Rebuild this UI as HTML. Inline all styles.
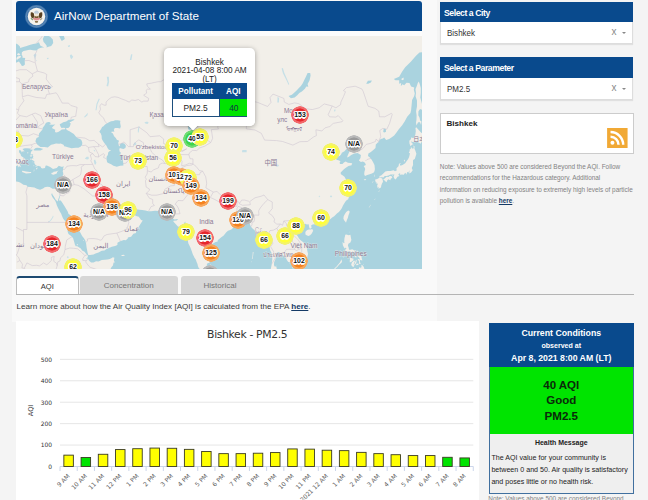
<!DOCTYPE html>
<html lang="en"><head><meta charset="utf-8"><title>AirNow Department of State</title>
<style>
*{box-sizing:border-box;margin:0;padding:0}
html,body{width:648px;height:500px;overflow:hidden}
body{background:#f4f4f4;font-family:"Liberation Sans",sans-serif;color:#222;position:relative}
.abs{position:absolute;white-space:nowrap}
.hdr{left:16.2px;top:1.2px;width:405.8px;height:29.4px;background:#094a8d;border-radius:3px 3px 0 0}
.ttl{left:54px;top:7.8px;font-size:11.65px;color:#fff;line-height:15px}
.ph{background:#094a8d;color:#fff;line-height:20px;padding-left:4px}
.ph span{display:block;line-height:21.6px;font-weight:bold;font-size:9.8px;letter-spacing:-0.5px;transform:scaleX(.885);transform-origin:0 50%}
.sel{background:#fff;border:1px solid #ddd;border-top:none;box-shadow:0 1px 1px rgba(0,0,0,.08);color:#333;line-height:22px;padding-left:6px}
.sel span{display:block;line-height:23.6px;font-size:9px;transform:scaleX(.89);transform-origin:0 50%}
.note{font-size:6.4px;color:#828282;line-height:11.55px}
a{color:#143a66;font-weight:bold;text-decoration:underline}
.tab{top:276px;height:18px;background:#d6d6d6;border-radius:3px 3px 0 0;color:#777;font-size:8.05px;text-align:center;line-height:20.6px}
.mk{position:absolute;width:18px;height:18px;margin:-9px 0 0 -9px;border-radius:50%}
.ml{position:absolute;width:30px;height:10px;margin:-5px 0 0 -15px;font-weight:bold;font-size:8px;line-height:10px;text-align:center;color:#111;transform:scaleX(.86);
 text-shadow:1px 0 0 #fff,-1px 0 0 #fff,0 1px 0 #fff,0 -1px 0 #fff,1px 1px 0 #fff,-1px -1px 0 #fff,1px -1px 0 #fff,-1px 1px 0 #fff,1.5px 0 .5px #fff,-1.5px 0 .5px #fff,0 1.5px .5px #fff,0 -1.5px .5px #fff,0 0 1.5px #fff,0 0 1.5px #fff}
.r{background:radial-gradient(circle,#e6262b 0,#e6262b 6.3px,#f2686a 6.8px,#f2686a 8.6px,rgba(242,104,106,0) 9px)}
.o{background:radial-gradient(circle,#f5821f 0,#f5821f 6.3px,#f7a75c 6.8px,#f7a75c 8.6px,rgba(247,167,92,0) 9px)}
.y{background:radial-gradient(circle,#ffff38 0,#ffff38 6.3px,#f3f36a 6.8px,#f3f36a 8.6px,rgba(243,243,106,0) 9px)}
.g{background:radial-gradient(circle,#9a9a9a 0,#9a9a9a 6.3px,#b9b9b9 6.8px,#b9b9b9 8.6px,rgba(185,185,185,0) 9px)}
.n{background:radial-gradient(circle,#3fd34a 0,#3fd34a 6.3px,#6fdc74 6.8px,#6fdc74 8.6px,rgba(111,220,116,0) 9px)}
</style></head>
<body>
<div class="abs" style="left:12px;top:0;width:425px;height:322px;background:#f9f9f9"></div>
<div class="abs" style="left:16.2px;top:30px;width:405.8px;height:6px;background:#fcfcfc"></div>
<div class="abs hdr"></div>
<svg class="abs" style="left:25px;top:5px" width="23" height="23" viewBox="0 0 23 23">
<circle cx="11.5" cy="11.5" r="11.4" fill="#4677aa"/><circle cx="11.5" cy="11.5" r="10.3" fill="none" stroke="#5f8dbb" stroke-width="1" opacity=".8"/>
<circle cx="11.5" cy="11.5" r="8.7" fill="#f6f3ec"/>
<ellipse cx="11.5" cy="7.3" rx="2.2" ry="1.9" fill="#bccad8"/>
<path d="M5.8 7.4 Q7.4 7 8.9 8.4 L9.2 12.6 Q7.6 13.4 6.4 12.4 Q5.2 10 5.8 7.4Z" fill="#5b4222"/>
<path d="M17.2 7.4 Q15.6 7 14.1 8.4 L13.8 12.6 Q15.4 13.4 16.6 12.4 Q17.8 10 17.2 7.4Z" fill="#5b4222"/>
<path d="M9.4 9.2 Q11.5 7.6 13.6 9.2 L13.4 12.8 L9.6 12.8Z" fill="#efe6d6"/>
<path d="M9.3 10.4 Q11.5 12.4 13.7 10.4 L13.5 12.9 L9.5 12.9Z" fill="#7a5a30"/>
<path d="M8 12.9 H15 V14.3 Q11.5 16.6 8 14.3Z" fill="#dc8e90"/>
<path d="M5.4 13 Q6.6 15.2 8 15.6 L7.6 13.4Z" fill="#6b8f5a"/>
<path d="M17.6 13 Q16.4 15.2 15 15.6 L15.4 13.4Z" fill="#a09070"/>
<path d="M9.6 15.6 Q11.5 16.6 13.4 15.6 L12.6 17.8 H10.4Z" fill="#8a744e"/>
</svg>
<div class="abs ttl">AirNow Department of State</div>
<div class="abs" id="map" style="left:16.2px;top:35.6px;width:405.8px;height:233.7px;background:#f2efe9;overflow:hidden">
<svg class="abs" style="left:0;top:0" width="405.8" height="233.7" viewBox="16.2 35.6 405.8 233.7"><path d="M3.8 33.6 15.7 36.4 15.1 39.9 15.4 42.6 18.1 44.0 20.1 46.0 20.4 47.6 23.4 46.6 26.9 45.5 29.7 44.6 33.4 43.6 36.4 43.0 39.1 41.9 40.7 45.3 43.4 46.6 44.4 47.0 42.4 47.0 40.4 47.6 38.1 48.6 37.1 50.2 33.4 49.9 30.4 49.3 28.4 49.6 26.2 50.2 23.7 50.7 22.1 51.9 21.9 54.4 22.7 55.7 22.7 57.3 25.4 57.6 24.9 60.4 25.1 64.2 23.7 65.4 22.1 65.7 20.9 63.5 19.1 61.1 16.7 62.0 15.4 63.2 13.7 66.9 3.8 66.9Z" fill="#aad3df" /><path d="M46.7 47.0 48.7 46.3 51.4 45.6 53.4 42.6 53.0 39.2 50.4 36.4 47.0 34.7 44.4 35.4 43.0 38.5 43.7 41.3 45.4 43.3 47.0 45.6Z" fill="#aad3df" /><path d="M62.0 40.6 65.0 38.5 63.7 34.4 61.0 30.8 58.7 30.1 58.0 33.6 59.7 36.4 61.0 39.2Z" fill="#aad3df" /><path d="M33.7 54.8 35.4 53.2 36.7 54.4 35.6 57.3 35.7 59.5 37.4 60.4 36.7 60.8 35.1 58.3 34.4 56.4Z" fill="#c6e0e7" /><path d="M47.0 57.6 48.7 57.3 48.7 58.6 47.4 58.9Z" fill="#c6e0e7" /><path d="M68.0 45.3 70.2 44.6 70.0 46.3 68.4 46.6Z" fill="#c6e0e7" /><path d="M70.0 55.1 71.4 53.8 73.4 56.4 71.7 58.9 70.7 57.6Z" fill="#c6e0e7" /><path d="M40.6 146.7 37.4 144.2 36.9 143.1 35.6 140.9 36.7 137.7 38.9 136.6 39.2 133.1 42.5 129.4 42.9 127.3 44.5 125.4 46.2 122.3 48.4 121.5 50.2 121.8 51.0 123.2 49.4 124.2 52.4 124.4 55.5 124.2 53.4 125.8 52.0 127.7 55.4 129.4 55.2 131.5 56.4 132.2 58.4 131.5 60.7 130.1 61.9 129.2 65.2 128.9 65.5 127.5 63.7 127.3 61.7 127.7 60.7 126.1 59.9 123.9 61.4 123.0 63.4 121.8 66.4 121.1 68.9 119.4 71.0 119.4 73.4 118.9 74.9 119.4 72.4 120.6 71.2 121.3 69.7 121.8 70.9 123.0 70.5 124.7 70.0 126.1 68.5 127.5 66.4 127.5 66.4 128.9 68.0 130.1 69.7 130.8 72.0 132.4 74.0 133.6 76.0 136.1 78.0 137.9 80.3 138.6 81.8 140.0 82.5 142.4 82.3 144.7 81.0 146.0 78.7 147.3 76.0 147.4 71.7 147.8 70.0 147.3 68.0 146.9 65.7 146.0 64.7 146.2 63.7 144.4 60.9 143.0 59.4 143.3 56.2 143.2 53.7 143.8 51.4 144.4 49.7 145.7 48.0 147.0 44.7 146.7 42.1 146.7Z" fill="#aad3df" /><path d="M33.6 149.5 35.4 147.8 37.1 147.4 40.1 147.5 43.4 148.5 40.7 150.2 37.1 150.2 34.7 150.2Z" fill="#aad3df" /><path d="M3.8 165.4 16.1 165.4 16.7 165.8 17.4 164.6 18.4 166.3 18.7 167.1 19.1 165.6 20.2 166.3 21.1 166.9 20.6 165.4 19.6 163.4 19.9 162.3 21.1 163.2 22.1 162.7 21.6 161.1 22.4 160.6 23.7 161.9 24.1 160.0 25.7 160.4 25.6 159.6 24.2 157.7 22.1 156.2 20.1 154.9 21.4 155.6 20.7 153.6 19.4 152.1 19.1 150.2 20.2 149.5 21.6 150.8 21.7 152.1 22.9 150.8 23.7 152.1 23.4 150.4 25.1 151.2 23.6 149.7 22.7 148.6 25.1 147.9 27.4 147.8 30.1 148.2 30.6 149.1 33.1 149.3 31.1 151.7 31.1 152.3 30.7 154.1 33.4 153.8 32.7 154.9 33.6 156.4 32.9 157.5 34.1 158.5 32.1 157.9 31.4 159.2 32.9 159.8 34.6 160.9 34.4 162.9 35.7 163.8 34.9 164.6 37.4 164.6 35.1 165.9 37.1 166.1 38.1 165.4 40.7 166.1 41.4 167.7 42.7 168.1 45.2 167.7 45.7 165.4 47.0 165.2 50.4 166.6 53.2 168.6 56.9 167.7 59.0 165.4 61.4 166.3 62.5 166.3 64.4 166.1 63.2 167.5 63.5 168.7 62.9 170.8 63.5 172.8 63.0 175.0 62.0 177.2 60.7 180.4 60.4 181.5 59.7 184.4 58.5 186.7 57.7 187.5 56.4 188.1 54.4 188.3 52.7 188.4 51.4 187.6 49.9 186.6 47.4 186.3 44.9 186.8 43.2 188.1 40.2 189.3 37.1 188.4 34.6 187.2 30.4 186.5 27.6 186.4 26.7 184.9 23.6 184.4 20.7 182.4 19.1 181.6 16.7 181.1 14.7 181.6 3.8 181.6Z" fill="#aad3df" /><path d="M16.1 159.2 18.1 158.8 20.1 159.6 20.9 160.4 19.9 160.6 18.1 159.7 16.4 159.4Z" fill="#aad3df" /><path d="M101.3 128.5 99.5 131.3 101.0 133.1 101.8 135.4 102.0 138.6 103.3 140.9 104.7 142.9 106.7 145.3 107.7 147.5 109.0 149.3 111.5 150.2 110.0 150.6 108.5 151.9 108.0 154.5 106.8 156.4 106.7 158.7 107.3 161.9 108.5 162.7 111.3 163.8 113.6 165.4 117.0 166.3 120.3 165.4 123.6 165.2 123.5 163.2 123.1 159.6 123.1 156.2 122.0 154.9 120.3 154.1 121.3 152.1 120.1 151.9 119.5 149.3 120.0 147.5 121.6 148.2 123.6 148.6 125.6 147.5 126.1 145.3 124.6 143.1 122.0 142.7 120.3 143.8 120.0 146.2 118.8 144.9 118.5 142.2 119.3 140.4 117.0 139.3 116.0 137.7 114.3 135.9 113.1 133.1 111.1 131.5 113.3 131.0 114.6 131.5 114.0 129.4 115.0 127.5 118.0 127.5 120.3 128.0 121.0 126.1 120.3 122.3 120.6 120.3 118.0 119.8 115.3 119.8 113.6 120.6 111.3 120.8 108.7 122.0 107.0 123.0 105.3 124.2 103.7 125.8 102.3 126.6Z" fill="#aad3df" /><path d="M145.6 123.2 144.6 122.0 146.3 121.3 147.9 121.3 148.9 122.3 147.6 123.5Z" fill="#c6e0e7" /><path d="M138.1 132.2 138.0 129.9 138.5 127.0 139.3 125.6 139.8 126.1 139.3 128.5 139.1 130.8 138.8 132.2Z" fill="#c6e0e7" /><path d="M133.6 144.4 134.6 142.2 136.3 142.4 136.5 144.0 135.0 145.1Z" fill="#c6e0e7" /><path d="M189.2 129.9 191.2 128.9 193.2 124.9 195.6 122.7 199.6 122.3 203.6 123.0 207.2 122.5 207.6 121.1 204.2 121.1 200.2 121.1 195.6 121.1 192.6 121.1 190.6 123.2 188.6 125.6 188.2 128.0Z" fill="#aad3df" /><path d="M197.6 141.1 200.2 140.0 204.2 139.7 204.6 141.1 201.9 142.2 198.9 142.0Z" fill="#aad3df" /><path d="M214.2 124.7 215.9 123.0 217.2 123.9 215.9 125.4Z" fill="#c6e0e7" /><path d="M221.2 115.4 223.5 114.2 226.5 114.9 223.5 115.7Z" fill="#c6e0e7" /><path d="M288.8 95.6 291.1 97.8 294.8 97.2 297.5 94.8 299.5 92.7 302.1 91.0 305.1 88.3 306.5 86.1 308.5 86.3 307.8 83.5 309.8 79.8 310.8 75.2 310.4 72.6 307.8 72.6 306.1 76.4 304.5 79.6 302.8 83.0 301.1 85.5 299.1 87.7 296.8 90.2 294.1 92.7 292.1 94.4 290.1 95.1Z" fill="#aad3df" /><path d="M281.8 68.1 283.1 72.9 285.5 77.5 287.5 81.6 288.5 84.4 289.5 83.8 286.8 77.5 284.5 72.3 283.1 67.5Z" fill="#c6e0e7" /><path d="M277.5 102.2 279.1 102.0 279.3 97.5 277.8 96.4Z" fill="#c6e0e7" /><path d="M251.2 103.8 252.8 102.2 254.8 103.0 253.5 104.3Z" fill="#c6e0e7" /><path d="M383.4 131.5 384.0 128.0 386.0 128.5 386.2 131.3 384.7 132.0Z" fill="#aad3df" /><path d="M275.6 165.6 276.8 164.0 278.6 164.4 279.1 165.6 277.5 166.3Z" fill="#c6e0e7" /><path d="M85.0 158.3 86.7 156.4 88.7 156.4 89.0 158.7 87.3 159.0Z" fill="#c6e0e7" /><path d="M94.0 159.8 95.3 159.2 96.5 162.1 96.0 164.0 94.7 163.8 94.2 161.7Z" fill="#c6e0e7" /><path d="M54.4 158.3 55.5 156.2 56.0 157.9Z" fill="#c6e0e7" /><path d="M93.7 149.3 94.8 149.7 95.7 151.0 94.3 150.8Z" fill="#c6e0e7" /><path d="M288.8 252.7 290.1 252.9 292.0 254.9 291.1 255.2 289.8 253.9Z" fill="#c6e0e7" /><path d="M67.0 256.8 68.0 255.7 69.0 256.8 68.0 257.9Z" fill="#c6e0e7" /><path d="M53.2 215.0 53.7 216.3 52.0 219.2 50.0 221.3 48.4 222.0 48.4 221.5 50.4 219.9 52.4 217.0Z" fill="#c6e0e7" /><path d="M343.2 188.2 344.1 186.7 345.2 187.7 344.4 188.8Z" fill="#c6e0e7" /><path d="M330.1 196.3 331.1 194.8 332.4 195.9 331.4 197.1Z" fill="#c6e0e7" /><path d="M318.8 196.3 320.1 195.0 320.4 195.9 319.4 196.9Z" fill="#c6e0e7" /><path d="M334.1 110.9 334.8 108.9 335.9 109.4 335.3 111.2Z" fill="#c6e0e7" /><path d="M366.4 83.3 368.1 80.4 372.1 80.1 371.1 82.1 368.4 83.3Z" fill="#aad3df" /><path d="M242.2 151.9 242.5 149.7 246.8 149.7 246.8 151.9Z" fill="#c6e0e7" /><path d="M106.7 85.5 107.7 81.0 107.0 76.4 109.0 76.4 109.3 81.6 108.3 86.1Z" fill="#c6e0e7" /><path d="M95.7 109.9 96.7 103.3 99.0 98.0 100.0 98.6 97.7 103.8 96.7 109.9Z" fill="#c6e0e7" /><path d="M130.0 59.5 131.3 53.8 132.6 53.8 131.6 59.5Z" fill="#c6e0e7" /><path d="M84.0 116.9 86.7 113.9 88.0 112.4 87.7 114.9 85.3 116.9Z" fill="#c6e0e7" /><path d="M61.7 188.2 61.9 185.7 62.4 185.7 62.2 188.2Z" fill="#c6e0e7" /><path d="M110.3 283.6 110.0 269.9 111.6 266.9 113.1 265.2 113.8 262.2 115.0 262.0 114.1 260.1 114.6 257.3 113.0 256.9 112.0 257.6 110.0 258.6 107.7 259.1 105.0 259.3 102.0 259.6 98.7 261.0 96.3 260.8 93.7 262.0 91.3 262.0 89.3 260.3 88.7 259.0 87.5 258.1 86.0 258.3 87.3 257.4 88.0 256.9 88.0 255.1 86.2 253.4 84.7 251.3 82.3 250.0 81.0 248.1 79.0 246.9 77.0 245.5 76.2 246.0 75.2 244.5 74.4 241.7 73.4 238.2 72.0 236.2 68.7 233.7 68.2 232.3 67.7 230.5 67.9 227.0 67.4 224.9 66.5 222.0 63.4 218.4 62.0 215.0 61.4 213.4 60.0 211.0 58.0 207.1 56.9 204.7 56.4 202.9 55.4 200.4 54.0 198.7 52.5 196.5 51.5 194.0 52.2 192.7 52.7 194.0 54.4 196.7 55.7 199.1 57.9 201.1 58.5 198.9 59.4 196.3 60.2 194.2 60.4 195.2 59.5 198.6 59.0 200.1 61.0 200.1 62.7 202.5 65.2 206.6 67.9 211.0 68.7 213.7 70.5 214.5 72.0 216.3 73.7 219.2 74.2 223.8 76.0 227.0 77.8 228.6 80.5 232.2 82.3 235.5 84.0 237.5 85.5 240.0 86.3 243.1 86.8 247.2 87.8 252.3 88.5 254.6 90.3 254.7 93.7 254.0 95.7 253.0 98.7 252.0 102.0 250.3 104.7 250.0 107.3 248.2 110.3 247.0 112.0 246.4 115.3 245.5 117.6 244.5 117.6 242.4 120.3 240.8 124.0 239.6 126.0 239.8 128.0 238.2 128.0 237.2 131.3 236.3 133.6 233.4 136.3 232.7 136.0 230.4 136.5 228.1 138.3 227.7 140.0 224.5 141.6 222.0 142.9 220.2 141.3 219.5 139.0 216.3 136.3 215.6 132.8 213.6 131.5 210.8 131.6 206.2 130.6 207.1 130.1 208.2 128.0 210.3 125.0 213.2 122.3 214.5 119.0 214.1 116.3 214.8 115.0 213.4 115.6 211.6 115.5 210.1 115.6 207.9 114.3 207.0 113.1 209.0 113.0 211.9 112.1 210.5 111.0 209.0 110.6 206.0 109.1 203.8 107.3 201.9 106.5 201.0 105.3 198.6 104.0 196.3 103.0 195.0 104.2 194.0 105.5 192.7 107.0 190.9 109.0 192.3 110.6 191.7 112.3 194.4 113.1 196.5 114.6 200.4 117.3 201.6 119.0 202.7 121.6 204.7 124.6 205.1 126.6 205.5 129.0 204.7 131.3 203.2 133.6 203.6 134.0 206.8 134.6 208.4 136.1 208.8 139.6 209.4 142.3 209.7 145.6 210.1 148.6 210.8 151.3 210.8 155.3 210.3 158.9 210.5 161.9 209.9 164.6 209.4 165.9 210.5 166.9 211.9 168.3 214.8 169.9 215.7 170.9 216.3 172.6 217.7 174.8 219.1 177.6 218.6 178.2 218.8 176.9 220.2 173.8 220.4 173.5 221.1 175.6 223.3 178.1 226.0 180.2 226.7 182.2 226.0 183.9 224.9 184.2 222.9 185.4 221.1 185.9 223.3 186.1 225.1 186.4 227.7 186.1 230.5 186.3 232.8 186.9 236.2 187.9 239.6 188.6 243.1 189.6 245.0 190.6 247.2 191.9 250.6 192.9 253.7 194.7 257.3 196.1 259.3 196.9 261.8 197.7 263.7 198.1 265.5 198.7 267.2 199.9 268.6 201.2 269.7 202.1 270.0 202.1 283.6Z" fill="#aad3df" /><path d="M202.1 283.6 202.1 270.0 204.1 268.2 204.2 267.1 206.6 266.0 207.9 265.9 206.7 264.9 207.9 262.5 209.7 262.5 209.7 260.1 209.5 257.0 211.2 253.0 210.5 250.6 210.7 247.9 210.5 245.5 212.5 243.6 214.2 242.6 215.2 241.9 217.9 241.0 217.9 239.8 221.2 237.2 223.9 235.1 226.5 231.8 228.2 230.4 229.7 229.8 231.5 229.1 232.9 227.9 233.5 226.3 233.2 224.5 235.2 223.5 236.9 223.1 237.2 222.2 238.5 223.5 241.9 223.1 244.5 222.6 245.5 221.0 247.5 219.9 249.5 221.0 250.2 224.2 251.2 226.3 253.2 228.6 254.8 229.5 255.3 231.3 256.8 233.0 258.0 234.8 258.7 237.5 257.8 240.0 257.5 243.1 259.2 243.6 261.2 244.0 262.5 243.1 264.2 241.4 266.5 238.6 267.5 240.0 268.8 241.5 269.3 243.8 269.5 245.7 270.5 250.0 271.8 252.7 272.2 255.2 272.5 258.5 272.0 263.5 271.5 266.2 271.0 268.6 271.2 269.9 271.2 283.6Z" fill="#aad3df" /><path d="M277.8 283.6 277.8 269.2 276.8 268.2 276.6 266.2 274.8 266.2 274.2 264.5 274.3 261.8 275.3 259.5 276.1 257.4 276.7 254.8 276.8 252.7 278.5 251.7 280.0 252.0 279.8 254.6 281.1 254.6 282.8 254.4 284.5 256.1 285.8 257.1 287.1 259.5 288.5 261.5 290.8 261.7 291.8 262.3 293.8 263.5 293.0 265.2 292.6 268.2 294.5 267.6 296.0 266.0 298.5 264.9 299.5 262.5 300.5 262.3 302.1 261.7 303.8 260.5 306.5 259.1 307.5 257.1 307.8 255.4 308.3 253.7 307.6 250.8 307.1 247.9 306.5 246.2 304.3 242.7 302.5 241.2 300.5 239.6 299.0 237.9 298.1 236.2 296.0 233.7 296.5 230.0 298.8 228.3 299.5 226.3 301.5 225.6 303.5 223.8 305.5 223.3 307.1 224.0 308.9 223.8 309.3 226.3 309.8 228.1 311.1 228.1 311.8 227.0 311.3 225.2 312.8 224.2 314.8 223.8 316.6 222.9 319.4 222.6 321.1 221.7 321.9 221.5 322.1 219.3 323.1 220.4 324.4 221.0 326.1 219.9 327.9 219.3 330.4 218.8 332.4 217.2 334.4 215.9 337.1 213.2 339.1 211.6 340.8 209.7 342.1 207.5 343.1 205.3 344.4 203.1 346.2 200.4 348.4 198.9 349.1 196.7 349.7 192.9 348.1 191.7 346.4 191.1 347.7 190.2 349.9 189.0 349.2 187.3 349.7 185.9 348.1 183.6 346.4 181.6 346.2 179.2 344.7 176.4 342.7 174.8 341.1 173.8 340.8 172.4 342.1 170.8 344.1 168.9 345.7 167.5 348.7 165.6 351.7 164.8 352.4 162.9 350.4 162.5 348.1 162.3 345.9 161.2 344.1 162.1 342.7 163.6 340.1 163.6 339.9 161.7 340.9 161.3 339.4 160.0 336.8 159.4 335.4 157.9 335.9 156.4 337.8 156.2 339.8 155.6 341.1 154.3 342.1 152.3 344.7 150.8 346.4 148.9 347.7 148.0 349.7 148.2 350.7 149.7 349.1 152.3 348.1 154.5 347.2 157.0 349.1 156.4 351.4 154.5 354.4 153.0 357.9 152.5 359.4 153.6 361.1 154.7 360.7 157.5 359.1 160.0 361.1 161.5 363.1 161.1 365.2 162.3 366.1 164.6 363.9 165.6 365.1 167.5 365.4 168.9 364.7 171.2 364.4 173.8 365.2 175.6 367.4 174.6 369.2 174.0 371.4 173.4 373.7 172.4 374.7 170.8 375.1 168.5 374.7 164.6 373.2 161.5 371.7 159.2 370.1 157.0 368.2 155.6 368.6 153.2 371.1 151.7 374.1 149.1 375.7 147.5 376.0 144.2 378.0 142.0 379.2 141.5 379.4 140.2 381.0 138.6 383.0 138.2 384.4 137.2 386.4 139.5 389.4 138.6 392.0 136.8 394.4 135.2 396.7 132.2 399.0 128.9 402.4 124.9 405.0 120.8 407.4 116.4 410.7 112.7 411.3 109.9 411.8 104.8 412.3 99.6 414.3 95.9 415.0 93.2 414.0 89.4 414.5 87.2 411.3 86.1 409.7 82.7 406.7 82.4 404.4 84.9 402.7 83.8 401.0 85.8 401.4 82.7 399.4 83.3 399.4 79.8 395.7 79.8 394.0 78.7 399.4 76.4 402.4 71.1 405.4 66.9 411.0 61.4 416.0 55.7 419.7 52.2 424.3 51.5 443.3 51.2 443.3 283.6Z" fill="#aad3df" /><path d="M16.6 57.6 17.7 56.0 20.4 55.4 21.4 56.4 20.1 57.6 18.1 58.6 17.1 59.8 16.7 58.9Z" fill="#f2efe9" /><path d="M17.2 53.5 19.1 52.5 20.6 54.1 19.1 55.1 17.4 54.4Z" fill="#f2efe9" /><path d="M22.2 171.7 22.4 170.3 24.1 170.6 26.2 171.1 28.1 171.4 29.6 171.5 31.4 171.5 31.2 172.6 29.1 172.9 26.2 173.1 23.7 172.1Z" fill="#f2efe9" /><path d="M51.4 172.6 53.4 172.1 53.7 171.3 56.0 171.2 58.9 170.0 57.2 171.6 57.2 172.9 55.7 173.5 53.7 174.4 51.9 173.9Z" fill="#f2efe9" /><path d="M36.2 168.1 37.7 166.9 37.4 168.5 36.6 169.1Z" fill="#f2efe9" /><path d="M29.9 155.3 31.7 154.5 32.4 156.0 30.4 156.2Z" fill="#f2efe9" /><path d="M30.1 158.1 30.9 158.1 30.7 159.6 30.1 159.4Z" fill="#f2efe9" /><path d="M27.2 152.1 28.6 152.1 28.4 152.8 27.4 152.8Z" fill="#f2efe9" /><path d="M28.2 163.8 29.1 164.0 28.9 164.8 28.3 164.7Z" fill="#f2efe9" /><path d="M32.4 161.3 33.9 161.5 33.4 161.9 32.4 161.7Z" fill="#f2efe9" /><path d="M33.6 165.0 34.9 165.2 33.7 165.9Z" fill="#f2efe9" /><path d="M34.1 169.1 34.6 169.4 34.2 171.2 33.9 171.0Z" fill="#f2efe9" /><path d="M139.0 228.4 140.0 226.8 140.1 227.4 139.3 228.6Z" fill="#f2efe9" /><path d="M121.3 254.9 123.6 254.4 125.3 254.9 123.6 255.7 122.0 255.7Z" fill="#f2efe9" /><path d="M128.0 205.3 130.3 204.0 131.1 204.2 130.0 205.1Z" fill="#f2efe9" /><path d="M111.8 208.1 112.0 206.6 112.5 206.8 112.3 208.1Z" fill="#f2efe9" /><path d="M76.7 244.5 77.7 243.6 78.3 244.5 77.3 244.8Z" fill="#f2efe9" /><path d="M83.0 240.7 83.7 239.8 84.3 240.7Z" fill="#f2efe9" /><path d="M209.5 283.6 209.2 269.9 209.9 267.1 209.9 264.5 210.9 264.1 212.9 266.0 214.4 268.4 214.9 269.9 216.5 272.6 216.2 283.6Z" fill="#f2efe9" /><path d="M252.0 258.3 252.7 256.1 253.0 251.5 253.7 251.7 253.3 255.7 252.7 258.5Z" fill="#f2efe9" /><path d="M251.5 261.7 252.2 260.5 252.0 261.8Z" fill="#f2efe9" /><path d="M270.5 257.4 271.0 256.4 271.2 257.8Z" fill="#f2efe9" /><path d="M419.0 81.0 420.0 83.8 421.0 87.7 421.0 92.7 420.5 97.0 421.7 101.7 423.0 106.4 424.3 108.9 425.7 111.7 423.3 109.9 420.3 108.7 418.7 110.9 418.5 114.9 419.8 117.4 420.3 120.1 421.7 121.1 421.3 124.7 420.3 122.0 419.2 121.5 418.0 122.3 416.8 125.1 416.2 122.3 416.7 119.4 416.8 114.9 416.3 110.9 417.2 105.9 417.2 100.1 415.8 95.9 416.2 92.7 415.7 88.8 417.0 85.5 418.0 82.7Z" fill="#f2efe9" /><path d="M416.5 126.9 418.7 129.4 421.2 132.2 424.3 134.0 427.7 132.7 427.3 135.4 429.3 137.0 426.7 138.6 424.7 138.8 422.3 140.4 420.8 143.4 418.7 141.8 415.3 140.4 413.3 141.8 411.3 140.9 412.0 142.7 413.8 143.8 412.5 144.2 410.7 145.8 409.7 143.1 409.5 140.4 411.3 138.6 411.2 137.0 413.3 137.7 414.5 137.2 415.5 134.3 416.0 130.8 415.7 127.5Z" fill="#f2efe9" /><path d="M413.0 145.2 414.8 145.8 414.7 148.0 415.5 150.2 416.6 153.4 415.8 156.2 415.0 158.7 413.3 159.6 413.2 162.1 413.3 164.6 412.0 167.5 412.9 169.9 411.3 172.0 409.5 173.2 409.5 171.2 410.0 170.2 409.2 170.6 408.8 172.2 407.4 171.6 407.0 173.2 406.2 174.4 405.9 172.4 405.0 172.8 404.0 174.4 402.0 174.2 400.0 174.5 400.7 173.6 399.5 172.8 398.5 174.4 399.7 175.6 397.7 176.4 395.9 179.0 394.5 178.0 393.7 176.0 394.7 174.2 393.0 174.2 390.7 174.0 388.7 175.0 386.7 175.6 384.9 175.6 383.7 177.2 382.0 176.8 379.7 177.0 379.7 175.6 381.4 175.0 383.5 173.2 385.5 171.0 387.9 170.6 390.9 170.6 393.7 169.8 395.2 170.8 396.9 170.0 396.7 167.9 398.7 165.9 399.2 163.4 401.2 162.5 400.0 164.2 400.7 165.4 402.7 164.6 405.4 162.9 406.9 160.6 408.4 158.7 409.3 156.6 410.2 153.2 409.0 152.1 410.0 150.6 409.7 149.3 411.0 148.4 411.2 146.4 412.3 148.0 413.7 148.0 414.0 146.4Z" fill="#f2efe9" /><path d="M383.4 179.4 385.7 177.4 386.7 176.4 388.7 176.6 390.2 175.4 392.2 176.0 392.5 177.4 391.0 178.4 390.6 179.8 388.5 178.8 387.4 180.0 386.7 181.9 385.7 181.2 384.9 180.0Z" fill="#f2efe9" /><path d="M379.9 177.0 382.4 178.2 383.0 179.8 383.2 181.6 382.4 182.6 381.5 185.1 381.2 187.2 380.0 187.5 378.9 188.6 378.7 186.3 377.7 187.7 377.4 185.1 378.2 183.2 376.7 183.6 377.0 182.0 376.0 182.2 375.5 180.2 375.1 179.4 376.5 178.8 378.0 178.4Z" fill="#f2efe9" /><path d="M374.1 176.2 374.9 174.0 375.1 174.4 374.6 176.4Z" fill="#f2efe9" /><path d="M404.0 160.4 405.0 159.2 405.2 160.4 404.4 161.3Z" fill="#f2efe9" /><path d="M392.4 175.6 393.4 174.4 393.2 175.6Z" fill="#f2efe9" /><path d="M363.9 179.6 365.1 178.6 366.6 179.0 365.4 179.9Z" fill="#f2efe9" /><path d="M368.9 207.1 370.9 204.4 371.1 204.7 369.4 207.1Z" fill="#f2efe9" /><path d="M374.1 199.3 375.7 198.2 375.2 199.1Z" fill="#f2efe9" /><path d="M379.5 190.9 380.2 189.4 380.0 191.1Z" fill="#f2efe9" /><path d="M378.0 191.3 378.9 190.9 378.7 191.7Z" fill="#f2efe9" /><path d="M372.2 182.2 373.7 180.4 373.1 182.2Z" fill="#f2efe9" /><path d="M348.6 210.1 349.9 211.2 349.6 212.6 348.7 214.8 348.1 217.4 347.2 219.3 346.2 222.4 345.6 221.3 344.3 219.9 343.6 218.1 343.9 215.9 345.1 213.7 346.4 211.7 347.4 210.8Z" fill="#f2efe9" /><path d="M311.1 229.0 312.4 228.6 313.4 230.4 311.8 233.4 310.3 234.8 308.5 235.5 305.8 234.4 305.5 232.3 306.0 230.9 307.5 229.5 309.1 229.1Z" fill="#f2efe9" /><path d="M347.4 185.5 349.7 186.7 348.1 186.3Z" fill="#f2efe9" /><path d="M349.9 191.9 351.1 192.1 350.4 192.7Z" fill="#f2efe9" /><path d="M289.6 262.2 290.3 262.2 290.1 263.5Z" fill="#f2efe9" /><path d="M284.3 256.4 284.8 256.8 284.5 256.9Z" fill="#f2efe9" /><path d="M276.6 265.0 277.1 265.2 276.8 265.5Z" fill="#f2efe9" /><path d="M345.4 234.4 346.7 234.1 348.9 234.9 350.6 234.4 351.2 237.5 351.6 239.5 350.6 242.1 348.6 243.4 348.1 245.2 348.9 247.4 349.2 249.3 350.7 249.3 352.4 248.9 353.4 249.4 354.4 250.1 356.6 250.3 355.2 251.5 355.9 252.9 357.2 253.2 357.1 254.9 356.2 254.6 355.2 253.5 354.1 252.0 352.6 250.5 352.1 252.7 351.1 251.5 349.4 250.3 347.7 251.3 346.9 250.8 345.6 250.6 345.4 249.3 346.4 248.4 346.6 247.7 345.4 247.4 345.2 248.4 344.2 247.2 343.1 244.8 342.7 241.7 344.1 242.9 344.7 242.6 344.4 241.0 344.7 237.7 345.2 235.8Z" fill="#f2efe9" /><path d="M344.4 251.8 346.6 251.7 347.4 252.0 348.6 254.4 347.9 255.7 346.9 255.7 346.1 254.4 345.2 252.7Z" fill="#f2efe9" /><path d="M334.1 268.9 335.4 267.4 336.8 266.0 338.4 264.0 340.1 262.0 341.1 260.1 341.8 258.8 342.2 261.5 341.3 262.5 339.3 264.4 337.9 266.2 336.3 267.6 334.8 269.1Z" fill="#f2efe9" /><path d="M342.9 256.8 344.6 256.1 344.1 256.9Z" fill="#f2efe9" /><path d="M349.7 257.1 351.4 257.6 352.6 258.1 353.9 258.3 353.2 260.1 352.1 261.2 350.1 262.0 349.9 260.5 350.2 258.8Z" fill="#f2efe9" /><path d="M354.1 260.1 355.2 260.7 354.6 262.2 353.9 263.9 354.4 265.9 353.4 266.7 352.1 265.5 351.4 264.4 352.1 262.2 353.2 261.2Z" fill="#f2efe9" /><path d="M354.4 265.4 355.6 263.7 356.4 262.5 356.9 260.1 356.9 259.1 356.2 259.8 355.4 261.8 354.6 263.9Z" fill="#f2efe9" /><path d="M356.1 264.5 357.1 263.0 358.6 263.4 358.7 264.4 357.1 264.9Z" fill="#f2efe9" /><path d="M357.7 258.6 358.7 258.5 360.1 259.1 360.2 261.5 360.9 263.5 359.9 263.5 359.2 263.0 359.4 261.2 358.7 260.1 358.1 259.0Z" fill="#f2efe9" /><path d="M357.7 254.9 361.1 254.9 361.7 256.4 362.1 258.5 362.6 260.1 360.4 259.5 359.7 257.5 358.7 256.5Z" fill="#f2efe9" /><path d="M354.1 255.4 355.7 254.7 356.9 257.1 355.4 256.9 355.1 256.1Z" fill="#f2efe9" /><path d="M352.1 283.6 352.2 269.9 353.4 268.6 354.6 267.9 356.2 268.2 356.1 269.7 357.4 269.4 358.9 268.6 359.4 266.9 360.6 267.4 361.7 266.9 361.6 264.4 363.2 265.4 364.1 266.9 364.6 268.6 364.6 283.6Z" fill="#f2efe9" /><path d="M363.4 264.5 363.9 263.4 364.1 264.2Z" fill="#f2efe9" /><path d="M356.9 251.3 357.7 249.8 358.1 251.0 357.4 251.7Z" fill="#f2efe9" /><path d="M349.6 252.0 350.4 251.7 350.2 252.5Z" fill="#f2efe9" /><path d="M349.4 231.6 350.1 231.4 349.7 232.0Z" fill="#f2efe9" /><path d="M401.4 78.7 403.7 77.0 404.0 79.0 402.4 79.8Z" fill="#f2efe9" /><path d="M107.3 123.2 105.3 121.3 103.7 117.4 100.7 114.9 99.0 112.4 100.7 108.9 100.0 105.6 101.7 103.3 104.3 104.8 106.3 104.8 106.3 101.7 108.7 99.1 111.6 97.0 115.0 96.4 118.3 97.0 122.0 98.6 125.6 99.9 129.3 101.7 132.0 99.6 135.3 100.1 138.6 99.1 142.0 101.7 143.9 100.7 148.3 100.7 148.9 98.0 145.3 95.9 143.9 94.8 146.9 92.7 146.3 89.9 147.6 88.8 150.6 88.8 147.6 85.8 146.9 83.5 151.9 82.7 154.3 82.1 158.6 81.3 160.9 81.3 163.6 79.6 170.9 77.5 173.6 75.2 179.6 75.8 180.9 82.1 184.2 81.6 188.6 83.3 189.2 85.5 191.9 84.9 198.6 82.1 199.9 81.0 203.2 87.2 210.2 100.7 214.9 100.7 221.5 99.6 227.5 106.9 232.9 105.9 234.5 109.2 236.2 109.1M118.6 144.2 122.3 142.7 124.3 141.5 128.6 146.2 130.3 146.2 130.3 129.4 139.0 126.6 146.9 132.2 150.3 136.3 159.9 135.4 163.9 138.6 163.6 143.1 165.3 143.6 165.9 146.7 169.9 146.7 170.6 148.4 173.6 145.8 177.6 143.1 180.1 142.0M130.3 146.2 133.6 146.2 134.0 143.6 137.0 140.9 139.0 139.5 143.6 142.2 143.9 145.8 149.9 147.1 151.9 151.9 156.9 156.4 162.6 159.6 165.4 163.2M123.3 163.2 126.3 162.7 128.3 160.0 134.3 159.4 138.3 161.9 141.3 162.5 144.9 166.1 147.4 166.1 147.6 170.4M147.6 170.4 151.3 171.6 153.9 169.4 158.6 167.5 159.6 164.2 162.3 162.7 165.4 163.2 169.6 163.8 170.3 164.8 174.6 164.2 177.6 162.1 177.9 159.2 181.2 159.2 182.2 160.9 181.9 165.4 185.6 164.6 189.6 162.9 193.2 163.6M193.2 163.6 192.2 164.6 186.9 165.2 182.2 167.1 180.9 168.7 182.2 172.0 180.6 175.2 180.6 176.6 176.9 176.8 176.6 180.4 174.6 182.8 174.6 185.1 170.9 185.5 164.9 189.0 164.6 192.9 156.9 194.8 151.9 194.8 146.5 193.0M147.6 170.4 147.3 173.6 145.3 176.8 146.6 178.8 145.6 180.4 146.4 186.7 149.6 188.6 149.3 190.2 146.5 193.0 149.6 197.8 152.9 199.1 152.9 203.1 154.6 205.1 151.3 206.2 148.9 210.5M105.5 192.7 103.7 190.6 102.7 188.6 103.2 185.5 97.3 180.8 95.0 176.8 96.3 173.2 97.7 172.0 96.3 169.6 95.0 168.7 93.0 164.0 91.0 160.4 91.7 158.7 90.5 154.5 93.0 153.2 95.3 156.2 98.7 156.6 100.3 155.3 103.7 153.2 104.8 154.5 103.7 157.0 106.7 158.5M93.0 164.0 84.8 164.2 80.3 164.2 77.0 165.4 72.0 165.2 67.0 165.9 65.9 167.7 64.4 169.1 63.5 169.0M84.8 164.2 81.3 166.7 81.7 168.7 81.0 173.6 80.0 175.2 73.0 179.2 74.4 184.2 67.0 186.7 70.4 190.6 68.7 192.5 66.2 193.1 63.9 195.5 60.2 195.0M73.0 179.2 66.4 183.6 62.9 181.8 62.4 179.8 65.7 176.0 63.7 174.2M60.7 180.4 62.4 179.8M62.9 181.8 62.2 183.2 61.9 186.7 60.4 194.2M57.9 187.7 60.0 194.4M74.4 184.2 78.3 184.9 84.0 188.2 92.7 195.5 98.3 195.9 98.8 195.9 101.8 196.3 102.7 198.0 105.0 198.0M98.8 195.9 100.7 192.7 103.5 192.5M86.3 241.7 87.7 240.7 87.5 238.6 90.3 238.2 94.3 238.2 98.3 238.8 100.3 239.8 102.0 239.3 104.3 235.5 107.3 234.1 117.0 232.7 120.6 240.8M117.0 232.7 127.0 229.1 129.1 222.0 127.6 219.5 119.0 218.6 115.6 214.1M127.6 219.5 129.6 214.1 130.6 212.1 131.5 211.4M113.0 212.1 114.3 212.6 115.5 212.6M27.6 186.4 26.1 191.7 27.1 195.5 27.1 222.0 27.1 229.1 23.7 229.1 23.7 230.9 23.7 244.1 20.1 245.2 18.7 249.6 17.4 253.4 16.4 254.7 18.7 256.8 20.1 260.1 17.1 261.8M27.1 222.0 48.0 222.0 48.7 221.3 48.4 222.0 66.7 222.0M23.7 230.9 13.7 225.6M20.1 260.1 22.7 263.9 22.1 267.6 24.4 267.9 27.1 262.5 32.4 265.2 36.7 264.9 39.7 265.5 42.4 263.5 43.7 262.5 47.0 264.4 50.0 261.8 51.7 259.8 51.5 257.8 51.7 256.8 54.4 256.1 54.0 258.1 54.0 261.0 56.7 262.8 57.4 265.2 58.0 261.5 60.2 260.5 60.7 257.4 64.0 254.4 65.2 249.1 65.5 245.8 67.0 239.5 72.4 236.2M24.4 267.9 27.7 270.6M57.4 265.2 56.2 269.1 53.7 270.9M65.2 249.1 70.0 247.6 73.7 247.9 77.7 248.4 82.7 252.7 85.0 255.2 83.0 258.1 83.0 260.1 86.7 260.2 87.8 258.6M85.0 255.2 87.3 254.4M86.7 260.2 85.8 261.5 89.0 265.7 90.3 266.9 100.2 270.2 103.6 270.2 97.0 276.9M170.9 216.3 172.8 213.7 180.2 213.4 178.9 208.6 177.2 205.3 175.3 203.8 178.2 200.1 183.2 200.3 186.9 195.5 189.9 192.5 192.2 188.6 191.9 185.5 194.6 183.6 192.6 181.6 190.2 180.0 190.1 174.4 195.2 174.4 199.9 174.2 200.2 172.4 202.9 170.8M193.2 163.6 196.2 165.9 199.6 170.2 202.9 170.8 205.9 176.4 206.9 182.8 206.1 187.5 213.5 191.7 217.2 191.1 221.9 195.5 227.2 197.8 230.2 200.1 233.2 200.1 237.2 200.4M213.5 191.7 210.5 197.1 214.2 198.7 221.2 202.5 225.5 202.7 229.5 205.3 237.2 206.0 237.2 200.4 239.9 202.7M239.5 203.4 242.8 204.9 250.5 204.4 250.2 201.9 248.8 200.8 244.8 199.7 241.9 199.7 239.9 202.7 239.5 203.4M250.2 201.0 255.2 197.4 261.2 195.9 264.2 194.6 268.0 199.3 264.2 202.9 260.5 207.5 258.8 210.5 259.2 214.8 254.5 214.6 254.8 218.4 254.2 221.3 252.2 222.0 252.2 224.5 251.0 226.5M240.4 222.4 239.9 218.8 239.4 214.1 237.2 212.8 237.2 208.2 238.4 206.0 242.8 207.5 243.0 210.1 251.5 211.2 250.8 214.1 247.5 214.8 247.5 216.6 248.5 218.4 249.5 217.4 251.2 216.3 252.2 222.0M268.0 199.3 272.5 201.6 272.5 208.2 268.8 212.6 272.5 215.2 274.8 218.8 274.2 221.5 277.1 223.8 280.6 223.6 277.1 227.9 273.5 229.8 270.2 230.2 268.2 234.4 269.3 237.2 271.8 240.3 273.2 242.7 270.8 246.2 273.8 251.3 274.2 254.7 275.6 257.4 272.8 262.3 272.0 263.5M277.1 227.9 278.5 230.9 281.1 230.7 280.0 237.5 283.8 235.5 286.8 234.8 290.1 235.1 292.6 238.2 292.6 241.4 295.5 244.1 295.3 247.7 294.1 248.8 286.8 248.9 285.1 251.3 284.6 252.3 286.5 257.9M294.1 248.8 296.8 250.1 302.0 247.6 301.8 255.4 298.1 256.9 296.3 258.3 297.5 260.1 293.5 260.5 291.6 262.2M284.0 220.6 286.5 223.1 287.1 226.0 292.1 227.0 290.1 230.2 293.5 233.5 294.1 235.1 298.5 239.6 301.8 244.5 302.0 247.6M303.5 223.6 300.1 222.6 298.8 218.8 294.5 217.4 292.8 219.2 290.0 220.2 284.0 220.6 282.8 224.9 280.6 223.6M236.2 109.1 238.9 113.4 243.5 115.7 246.8 121.3 246.5 128.5 255.2 129.6 261.5 132.9 264.8 139.7 276.8 140.2 282.8 141.1 293.1 144.7 300.1 141.3 307.8 141.1 313.4 136.8 316.6 135.2 316.1 129.4 322.1 130.6 325.1 127.5 330.1 126.1 333.4 123.0 342.4 121.3 343.1 120.3 338.4 115.2 336.1 116.7 329.8 116.4 328.4 114.2 332.4 105.6M236.2 109.1 242.2 105.3 246.8 102.7 251.2 100.4 257.8 102.0 267.8 106.1 271.2 102.0 270.2 97.2 273.2 93.7 284.1 98.0 284.5 101.7 289.1 104.0 294.8 102.5 299.1 103.3 305.5 108.2 312.4 109.2 319.4 107.4 324.4 103.5 332.4 105.6 336.1 107.4 340.8 104.3 341.1 101.7 343.7 96.2 345.7 91.3 343.6 90.2 346.7 87.2 355.4 85.8 362.1 88.6 363.4 91.0 368.4 105.9 375.1 107.9 379.0 110.7 379.7 116.4 385.0 116.4 391.7 112.9 392.5 113.7 389.7 123.2 387.0 128.9 383.0 128.0 380.0 130.1 381.0 136.3 378.7 141.1 379.0 141.8M378.9 141.3 376.4 138.6 375.7 141.1 370.4 143.1 366.4 144.0 363.4 147.8 358.1 151.9M365.7 160.6 367.1 159.2 371.2 157.9M234.5 109.4 229.5 112.9 228.5 119.6 220.2 118.9 217.9 126.8 218.7 128.7 211.5 129.2 212.9 137.9 210.9 142.2 204.9 145.8 199.9 147.5 196.9 150.2 192.9 149.9 189.6 152.5 189.1 154.3 190.2 158.3 193.2 158.5 193.1 163.6M210.9 142.2 207.6 139.7 196.9 139.1 192.6 137.7 188.6 141.3 182.7 139.5 180.1 142.0 180.9 146.7 178.6 145.8 177.6 148.0 182.6 151.0 186.9 148.4 183.6 149.9 178.6 151.5 174.6 151.0 178.2 154.1 189.1 154.3M174.6 151.0 172.3 151.0 170.3 154.1 168.3 155.3 171.6 159.6 169.6 163.8M22.1 83.5 22.4 91.0 22.6 96.4 28.1 94.8 36.1 97.0 41.4 97.5 45.5 98.0 46.9 94.0 49.7 93.7 48.0 88.3 52.7 86.3 49.7 83.0 46.4 78.7 47.0 74.1 44.4 72.6 37.7 70.8 32.4 73.5 33.1 75.8 29.4 78.7 28.7 81.6 22.1 83.5M49.7 93.7 56.4 92.4 58.4 95.4 62.4 102.7 68.7 102.7 71.0 105.1 77.3 106.9 76.0 114.9 76.3 115.7 71.4 116.9 71.0 119.4M22.6 97.0 24.1 100.4 19.2 107.1 18.9 109.4 17.6 112.9 20.1 115.2 26.7 116.4 32.4 113.7 35.4 112.7 40.9 115.2 44.0 122.7 40.2 124.7 37.7 127.3 42.5 128.5M32.4 113.7 37.7 121.8 37.7 127.3M18.9 109.4 13.7 107.9M13.7 122.3 20.1 115.2M13.7 130.8 18.6 130.8 19.4 133.1 20.4 135.0 28.4 135.6 33.7 133.3 39.1 135.2M19.4 133.1 18.4 138.6 18.2 141.8 20.2 146.0 25.4 145.1 31.6 144.4 35.4 142.9 37.1 143.1M31.6 144.4 32.4 146.2 30.6 148.6M13.7 148.0 20.2 146.0M18.2 141.8 13.7 142.2M37.2 50.2 35.1 54.4 35.4 62.3 37.7 70.8M24.9 60.3 29.1 60.1 34.9 62.3M13.7 71.2 20.1 69.3 26.7 69.3 32.4 73.5M13.7 76.4 19.7 78.4 19.7 81.3 22.1 83.5M13.7 81.4 19.7 81.3M36.4 43.0 41.1 37.8 43.7 33.6M77.0 136.8 85.3 137.7 90.0 140.4 94.3 140.0 98.5 143.6 103.0 146.7 105.7 143.8M82.2 145.2 85.7 144.9 88.7 147.1 89.3 151.5 93.0 153.2M88.7 147.1 93.7 146.2 99.3 146.2 98.5 143.6M93.7 146.2 95.7 148.4 97.0 151.0 98.7 154.1 98.7 156.6" fill="none" stroke="#ccc2d0" stroke-width="0.65" stroke-linejoin="round" opacity="0.85"/><g text-anchor="middle" fill="#8a7a96" font-family="'Liberation Sans','DejaVu Sans','Noto Sans CJK SC',sans-serif" stroke="#f2efe9" stroke-width="0.8" paint-order="stroke" stroke-opacity="0.7"><text x="36.5" y="88.2" font-size="6.6">Беларусь</text><text x="56.5" y="116.2" font-size="6.6">Україна</text><text x="24.0" y="127.2" font-size="6.6">România</text><text x="63.0" y="158.6" font-size="6.6">Türkiye</text><text x="20.0" y="163.2" font-size="6.6">Ελλάς</text><text x="165.0" y="116.4" font-size="6.6">Қазақстан</text><text x="152.0" y="148.7" font-size="6.2">O'zbekiston</text><text x="139.0" y="159.4" font-size="6.4">Türkmenistan</text><text x="123.5" y="186.0" font-size="6.8">ایران</text><text x="43.0" y="207.0" font-size="6.8">مصر</text><text x="96.0" y="217.0" font-size="6.8">السعودية</text><text x="101.0" y="247.5" font-size="6.8">اليمن</text><text x="132.0" y="231.0" font-size="6.8">عمان</text><text x="42.0" y="247.5" font-size="6.8">السودان</text><text x="18.0" y="247.0" font-size="6.8">تشاد</text><text x="162.0" y="180.7" font-size="6.6">افغانستان</text><text x="174.0" y="193.0" font-size="6.6">پاکستان</text><text x="206.5" y="223.6" font-size="6.6">India</text><text x="271.0" y="164.6" font-size="6.4">中国</text><text x="295.0" y="112.5" font-size="6.4">Монгол</text><text x="282.5" y="122.0" font-size="6.4">улс</text><text x="294.0" y="131.0" font-size="5.5">ᠮᠣᠩᠭᠣᠯ</text><text x="304.3" y="247.3" font-size="6.6">Việt Nam</text><text x="351.0" y="255.6" font-size="6.6">Philippines</text><text x="278.5" y="256.8" font-size="5.6">ประเทศไทย</text><text x="419.5" y="140.2" font-size="6.0">日本</text><text x="261.0" y="234.0" font-size="5.6">မြန်မာ</text></g></svg>
<div class="mk y" style="left:-1.9px;top:104.5px"></div>
<div class="mk r" style="left:283.6px;top:79.8px"></div>
<div class="mk y" style="left:315.2px;top:116.7px"></div>
<div class="mk g" style="left:338.0px;top:108.9px"></div>
<div class="mk y" style="left:332.1px;top:152.3px"></div>
<div class="mk y" style="left:158.2px;top:110.6px"></div>
<div class="mk y" style="left:156.7px;top:122.5px"></div>
<div class="mk y" style="left:122.1px;top:125.0px"></div>
<div class="mk n" style="left:176.0px;top:103.6px"></div>
<div class="mk y" style="left:183.7px;top:101.9px"></div>
<div class="mk o" style="left:158.0px;top:139.1px"></div>
<div class="mk o" style="left:165.7px;top:141.2px"></div>
<div class="mk y" style="left:171.4px;top:142.4px"></div>
<div class="mk o" style="left:175.2px;top:150.9px"></div>
<div class="mk o" style="left:184.7px;top:162.2px"></div>
<div class="mk r" style="left:211.7px;top:165.6px"></div>
<div class="mk g" style="left:47.2px;top:149.3px"></div>
<div class="mk r" style="left:75.5px;top:144.0px"></div>
<div class="mk r" style="left:87.5px;top:159.3px"></div>
<div class="mk g" style="left:83.1px;top:176.7px"></div>
<div class="mk o" style="left:96.1px;top:171.2px"></div>
<div class="mk g" style="left:108.8px;top:177.6px"></div>
<div class="mk y" style="left:111.8px;top:174.9px"></div>
<div class="mk g" style="left:150.7px;top:176.4px"></div>
<div class="mk o" style="left:58.2px;top:188.2px"></div>
<div class="mk y" style="left:170.3px;top:196.8px"></div>
<div class="mk r" style="left:189.0px;top:202.6px"></div>
<div class="mk r" style="left:36.0px;top:208.9px"></div>
<div class="mk o" style="left:221.9px;top:184.4px"></div>
<div class="mk g" style="left:228.6px;top:180.0px"></div>
<div class="mk y" style="left:247.8px;top:204.7px"></div>
<div class="mk y" style="left:269.3px;top:200.7px"></div>
<div class="mk y" style="left:280.1px;top:190.0px"></div>
<div class="mk y" style="left:304.9px;top:182.5px"></div>
<div class="mk o" style="left:194.9px;top:217.5px"></div>
<div class="mk y" style="left:56.7px;top:231.3px"></div>
<div class="mk o" style="left:282.9px;top:225.2px"></div>
<div class="mk g" style="left:193.5px;top:238.2px"></div>
<div class="ml" style="left:-1.9px;top:104.5px">88</div>
<div class="ml" style="left:283.6px;top:79.8px">153</div>
<div class="ml" style="left:315.2px;top:116.7px">74</div>
<div class="ml" style="left:338.0px;top:108.9px">N/A</div>
<div class="ml" style="left:332.1px;top:152.3px">70</div>
<div class="ml" style="left:158.2px;top:110.6px">70</div>
<div class="ml" style="left:156.7px;top:122.5px">56</div>
<div class="ml" style="left:122.1px;top:125.0px">73</div>
<div class="ml" style="left:176.0px;top:103.6px">40</div>
<div class="ml" style="left:183.7px;top:101.9px">53</div>
<div class="ml" style="left:158.0px;top:139.1px">102</div>
<div class="ml" style="left:165.7px;top:141.2px">127</div>
<div class="ml" style="left:171.4px;top:142.4px">72</div>
<div class="ml" style="left:175.2px;top:150.9px">149</div>
<div class="ml" style="left:184.7px;top:162.2px">134</div>
<div class="ml" style="left:211.7px;top:165.6px">199</div>
<div class="ml" style="left:47.2px;top:149.3px">N/A</div>
<div class="ml" style="left:75.5px;top:144.0px">166</div>
<div class="ml" style="left:87.5px;top:159.3px">158</div>
<div class="ml" style="left:83.1px;top:176.7px">N/A</div>
<div class="ml" style="left:96.1px;top:171.2px">136</div>
<div class="ml" style="left:108.8px;top:177.6px">N/A</div>
<div class="ml" style="left:111.8px;top:174.9px">96</div>
<div class="ml" style="left:150.7px;top:176.4px">N/A</div>
<div class="ml" style="left:58.2px;top:188.2px">134</div>
<div class="ml" style="left:170.3px;top:196.8px">79</div>
<div class="ml" style="left:189.0px;top:202.6px">154</div>
<div class="ml" style="left:36.0px;top:208.9px">184</div>
<div class="ml" style="left:221.9px;top:184.4px">120</div>
<div class="ml" style="left:228.6px;top:180.0px">N/A</div>
<div class="ml" style="left:247.8px;top:204.7px">66</div>
<div class="ml" style="left:269.3px;top:200.7px">66</div>
<div class="ml" style="left:280.1px;top:190.0px">88</div>
<div class="ml" style="left:304.9px;top:182.5px">60</div>
<div class="ml" style="left:194.9px;top:217.5px">125</div>
<div class="ml" style="left:56.7px;top:231.3px">62</div>
<div class="ml" style="left:282.9px;top:225.2px">102</div>
</div>
<div class="abs" style="left:163.7px;top:48px;width:91.8px;height:77.5px;background:#fff;border-radius:5px;box-shadow:0 1px 5px rgba(0,0,0,.35)"></div>
<div class="abs" style="left:187.6px;top:120.2px;width:10px;height:10px;background:#fff;transform:rotate(45deg) scale(.78);box-shadow:1px 1px 2px rgba(0,0,0,.28)"></div>
<div class="abs" style="left:163.7px;top:110px;width:91.8px;height:15.5px;background:#fff;border-radius:0 0 5px 5px"></div>
<div class="abs" style="left:163.7px;top:59px;width:91.8px;text-align:center;font-size:8.2px;line-height:8.4px;color:#222;white-space:normal">Bishkek<br>2021-04-08 8:00 AM<br>(LT)</div>
<div class="abs" style="left:172px;top:83.2px;width:75.3px;height:33.8px;border:1px solid #1d4f7e;background:#fff"></div>
<div class="abs" style="left:172px;top:83.2px;width:75.3px;height:15.6px;background:#094a8d"></div>
<div class="abs" style="left:219.3px;top:98.8px;width:27.4px;height:17.6px;background:#00e400;border-left:1px solid #1d4f7e"></div>
<div class="abs" style="left:172px;top:83.2px;width:47.3px;text-align:center;color:#fff;font-weight:bold;font-size:8.15px;line-height:17.4px">Pollutant</div>
<div class="abs" style="left:219.3px;top:83.2px;width:28px;text-align:center;color:#fff;font-weight:bold;font-size:8.15px;line-height:17.4px">AQI</div>
<div class="abs" style="left:172px;top:99.6px;width:47.3px;text-align:center;color:#222;font-size:8.4px;line-height:17.8px">PM2.5</div>
<div class="abs" style="left:219.8px;top:99.6px;width:28px;text-align:center;color:#134;font-size:8.4px;line-height:17.8px">40</div>

<div class="abs ph" style="left:440px;top:2px;width:193px;height:20.3px"><span>Select a City</span></div>
<div class="abs sel" style="left:440px;top:22.3px;width:193px;height:22px"><span>Bishkek</span></div>
<div class="abs ph" style="left:440px;top:57.4px;width:193px;height:20.4px"><span>Select a Parameter</span></div>
<div class="abs sel" style="left:440px;top:77.8px;width:193px;height:22px"><span>PM2.5</span></div>
<div class="abs" style="left:611.6px;top:33.2px;font-size:10px;color:#8a8a8a;line-height:10px;margin-top:-6px">x</div>
<div class="abs" style="left:621.7px;top:32.0px;width:0;height:0;border-left:2.9px solid transparent;border-right:2.9px solid transparent;border-top:2.9px solid #888"></div>
<div class="abs" style="left:611.6px;top:88.7px;font-size:10px;color:#8a8a8a;line-height:10px;margin-top:-6px">x</div>
<div class="abs" style="left:621.7px;top:87.5px;width:0;height:0;border-left:2.9px solid transparent;border-right:2.9px solid transparent;border-top:2.9px solid #888"></div>
<div class="abs" style="left:439.5px;top:113px;width:194.5px;height:40.5px;background:#fff;border:1px solid #ccc"></div>
<div class="abs" style="left:446.5px;top:117.5px;font-size:8.07px;font-weight:bold;color:#222;line-height:11px">Bishkek</div>
<svg class="abs" style="left:607px;top:127.8px" width="20.7" height="20" viewBox="0 0 21.5 21">
<rect width="21.5" height="21" fill="#f1a935"/>
<circle cx="5.6" cy="15.6" r="2.1" fill="#fff"/>
<path d="M3.6 9.2a8.4 8.4 0 0 1 8.4 8.4" fill="none" stroke="#fff" stroke-width="2.6"/>
<path d="M3.6 4.3a13.3 13.3 0 0 1 13.3 13.3" fill="none" stroke="#fff" stroke-width="2.6"/>
</svg>
<div class="abs note" style="left:439.8px;top:160.7px">Note: Values above 500 are considered Beyond the AQI. Follow<br>recommendations for the Hazardous category. Additional<br>information on reducing exposure to extremely high levels of particle<br>pollution is available <a>here</a>.</div>
<div class="abs" style="left:16px;top:276px;width:62.7px;height:18.4px;background:#fff;border:1px solid #bdbdbd;border-bottom:none;border-top:2px solid #1d4a72;border-radius:3.5px 3.5px 0 0;color:#333;font-size:7.6px;text-align:center;line-height:18.6px">AQI</div>
<div class="abs tab" style="left:80px;width:97.5px">Concentration</div>
<div class="abs tab" style="left:180.5px;width:79px">Historical</div>
<div class="abs" style="left:16px;top:293.8px;width:617.5px;height:1px;background:#b4b4b4"></div>
<div class="abs" style="left:16.5px;top:300.5px;font-size:8.1px;color:#3a3a3a;line-height:11px">Learn more about how the Air Quality Index [AQI] is calculated from the EPA <a>here</a>.</div>
<div class="abs" style="left:16.2px;top:321.2px;width:462.4px;height:179px;background:#fff"></div>
<svg class="abs" style="left:0;top:300px" width="648" height="200" viewBox="0 300 648 200" font-family="'DejaVu Sans','Liberation Sans',sans-serif"><path d="M60.0 466.50H473.3" stroke="#ccd6eb" stroke-width="1"/><text x="52" y="468.8" text-anchor="end" font-size="5.95" fill="#333">0</text><path d="M60.0 445.07H473.3" stroke="#e6e6e6" stroke-width="1"/><text x="52" y="447.4" text-anchor="end" font-size="5.95" fill="#333">100</text><path d="M60.0 423.64H473.3" stroke="#e6e6e6" stroke-width="1"/><text x="52" y="425.9" text-anchor="end" font-size="5.95" fill="#333">200</text><path d="M60.0 402.21H473.3" stroke="#e6e6e6" stroke-width="1"/><text x="52" y="404.5" text-anchor="end" font-size="5.95" fill="#333">300</text><path d="M60.0 380.78H473.3" stroke="#e6e6e6" stroke-width="1"/><text x="52" y="383.1" text-anchor="end" font-size="5.95" fill="#333">400</text><path d="M60.0 359.35H473.3" stroke="#e6e6e6" stroke-width="1"/><text x="52" y="361.7" text-anchor="end" font-size="5.95" fill="#333">500</text><path d="M60.00 466.5V471.0" stroke="#ccd6eb" stroke-width="1"/><path d="M77.22 466.5V471.0" stroke="#ccd6eb" stroke-width="1"/><path d="M94.44 466.5V471.0" stroke="#ccd6eb" stroke-width="1"/><path d="M111.66 466.5V471.0" stroke="#ccd6eb" stroke-width="1"/><path d="M128.88 466.5V471.0" stroke="#ccd6eb" stroke-width="1"/><path d="M146.10 466.5V471.0" stroke="#ccd6eb" stroke-width="1"/><path d="M163.32 466.5V471.0" stroke="#ccd6eb" stroke-width="1"/><path d="M180.54 466.5V471.0" stroke="#ccd6eb" stroke-width="1"/><path d="M197.76 466.5V471.0" stroke="#ccd6eb" stroke-width="1"/><path d="M214.98 466.5V471.0" stroke="#ccd6eb" stroke-width="1"/><path d="M232.20 466.5V471.0" stroke="#ccd6eb" stroke-width="1"/><path d="M249.42 466.5V471.0" stroke="#ccd6eb" stroke-width="1"/><path d="M266.64 466.5V471.0" stroke="#ccd6eb" stroke-width="1"/><path d="M283.86 466.5V471.0" stroke="#ccd6eb" stroke-width="1"/><path d="M301.08 466.5V471.0" stroke="#ccd6eb" stroke-width="1"/><path d="M318.30 466.5V471.0" stroke="#ccd6eb" stroke-width="1"/><path d="M335.52 466.5V471.0" stroke="#ccd6eb" stroke-width="1"/><path d="M352.74 466.5V471.0" stroke="#ccd6eb" stroke-width="1"/><path d="M369.96 466.5V471.0" stroke="#ccd6eb" stroke-width="1"/><path d="M387.18 466.5V471.0" stroke="#ccd6eb" stroke-width="1"/><path d="M404.40 466.5V471.0" stroke="#ccd6eb" stroke-width="1"/><path d="M421.62 466.5V471.0" stroke="#ccd6eb" stroke-width="1"/><path d="M438.84 466.5V471.0" stroke="#ccd6eb" stroke-width="1"/><path d="M456.06 466.5V471.0" stroke="#ccd6eb" stroke-width="1"/><path d="M473.28 466.5V471.0" stroke="#ccd6eb" stroke-width="1"/><rect x="63.86" y="455.14" width="9.5" height="11.36" fill="#ffff00" stroke="#3a3a22" stroke-width="0.9"/><text transform="translate(70.2 476.5) rotate(-45)" text-anchor="end" font-size="6.1" fill="#606060">9 AM</text><rect x="81.08" y="457.50" width="9.5" height="9.00" fill="#00e400" stroke="#3a3a22" stroke-width="0.9"/><text transform="translate(87.4 476.5) rotate(-45)" text-anchor="end" font-size="6.1" fill="#606060">10 AM</text><rect x="98.30" y="454.28" width="9.5" height="12.22" fill="#ffff00" stroke="#3a3a22" stroke-width="0.9"/><text transform="translate(104.6 476.5) rotate(-45)" text-anchor="end" font-size="6.1" fill="#606060">11 AM</text><rect x="115.52" y="449.57" width="9.5" height="16.93" fill="#ffff00" stroke="#3a3a22" stroke-width="0.9"/><text transform="translate(121.9 476.5) rotate(-45)" text-anchor="end" font-size="6.1" fill="#606060">12 PM</text><rect x="132.74" y="448.71" width="9.5" height="17.79" fill="#ffff00" stroke="#3a3a22" stroke-width="0.9"/><text transform="translate(139.1 476.5) rotate(-45)" text-anchor="end" font-size="6.1" fill="#606060">1 PM</text><rect x="149.96" y="448.07" width="9.5" height="18.43" fill="#ffff00" stroke="#3a3a22" stroke-width="0.9"/><text transform="translate(156.3 476.5) rotate(-45)" text-anchor="end" font-size="6.1" fill="#606060">2 PM</text><rect x="167.18" y="448.28" width="9.5" height="18.22" fill="#ffff00" stroke="#3a3a22" stroke-width="0.9"/><text transform="translate(173.5 476.5) rotate(-45)" text-anchor="end" font-size="6.1" fill="#606060">3 PM</text><rect x="184.40" y="449.36" width="9.5" height="17.14" fill="#ffff00" stroke="#3a3a22" stroke-width="0.9"/><text transform="translate(190.7 476.5) rotate(-45)" text-anchor="end" font-size="6.1" fill="#606060">4 PM</text><rect x="201.62" y="451.50" width="9.5" height="15.00" fill="#ffff00" stroke="#3a3a22" stroke-width="0.9"/><text transform="translate(208.0 476.5) rotate(-45)" text-anchor="end" font-size="6.1" fill="#606060">5 PM</text><rect x="218.84" y="453.64" width="9.5" height="12.86" fill="#ffff00" stroke="#3a3a22" stroke-width="0.9"/><text transform="translate(225.2 476.5) rotate(-45)" text-anchor="end" font-size="6.1" fill="#606060">6 PM</text><rect x="236.06" y="453.64" width="9.5" height="12.86" fill="#ffff00" stroke="#3a3a22" stroke-width="0.9"/><text transform="translate(242.4 476.5) rotate(-45)" text-anchor="end" font-size="6.1" fill="#606060">7 PM</text><rect x="253.28" y="453.21" width="9.5" height="13.29" fill="#ffff00" stroke="#3a3a22" stroke-width="0.9"/><text transform="translate(259.6 476.5) rotate(-45)" text-anchor="end" font-size="6.1" fill="#606060">8 PM</text><rect x="270.50" y="452.57" width="9.5" height="13.93" fill="#ffff00" stroke="#3a3a22" stroke-width="0.9"/><text transform="translate(276.9 476.5) rotate(-45)" text-anchor="end" font-size="6.1" fill="#606060">9 PM</text><rect x="287.72" y="448.93" width="9.5" height="17.57" fill="#ffff00" stroke="#3a3a22" stroke-width="0.9"/><text transform="translate(294.1 476.5) rotate(-45)" text-anchor="end" font-size="6.1" fill="#606060">10 PM</text><rect x="304.94" y="449.14" width="9.5" height="17.36" fill="#ffff00" stroke="#3a3a22" stroke-width="0.9"/><text transform="translate(311.3 476.5) rotate(-45)" text-anchor="end" font-size="6.1" fill="#606060">11 PM</text><rect x="322.16" y="450.21" width="9.5" height="16.29" fill="#ffff00" stroke="#3a3a22" stroke-width="0.9"/><text transform="translate(328.5 476.5) rotate(-45)" text-anchor="end" font-size="6.1" fill="#606060">2021 12 AM</text><rect x="339.38" y="450.64" width="9.5" height="15.86" fill="#ffff00" stroke="#3a3a22" stroke-width="0.9"/><text transform="translate(345.7 476.5) rotate(-45)" text-anchor="end" font-size="6.1" fill="#606060">1 AM</text><rect x="356.60" y="452.36" width="9.5" height="14.14" fill="#ffff00" stroke="#3a3a22" stroke-width="0.9"/><text transform="translate(363.0 476.5) rotate(-45)" text-anchor="end" font-size="6.1" fill="#606060">2 AM</text><rect x="373.82" y="453.64" width="9.5" height="12.86" fill="#ffff00" stroke="#3a3a22" stroke-width="0.9"/><text transform="translate(380.2 476.5) rotate(-45)" text-anchor="end" font-size="6.1" fill="#606060">3 AM</text><rect x="391.04" y="454.71" width="9.5" height="11.79" fill="#ffff00" stroke="#3a3a22" stroke-width="0.9"/><text transform="translate(397.4 476.5) rotate(-45)" text-anchor="end" font-size="6.1" fill="#606060">4 AM</text><rect x="408.26" y="455.57" width="9.5" height="10.93" fill="#ffff00" stroke="#3a3a22" stroke-width="0.9"/><text transform="translate(414.6 476.5) rotate(-45)" text-anchor="end" font-size="6.1" fill="#606060">5 AM</text><rect x="425.48" y="455.57" width="9.5" height="10.93" fill="#ffff00" stroke="#3a3a22" stroke-width="0.9"/><text transform="translate(431.8 476.5) rotate(-45)" text-anchor="end" font-size="6.1" fill="#606060">6 AM</text><rect x="442.70" y="457.29" width="9.5" height="9.21" fill="#00e400" stroke="#3a3a22" stroke-width="0.9"/><text transform="translate(449.1 476.5) rotate(-45)" text-anchor="end" font-size="6.1" fill="#606060">7 AM</text><rect x="459.92" y="457.93" width="9.5" height="8.57" fill="#00e400" stroke="#3a3a22" stroke-width="0.9"/><text transform="translate(466.3 476.5) rotate(-45)" text-anchor="end" font-size="6.1" fill="#606060">8 AM</text><text transform="translate(33 410.5) rotate(-90)" text-anchor="middle" font-size="6.6" fill="#333">AQI</text><text x="247.2" y="337.6" text-anchor="middle" font-size="10.8" fill="#333" letter-spacing="-0.35">Bishkek - PM2.5</text></svg>
<div class="abs" style="left:488.5px;top:323px;width:145.5px;height:171px;background:#efefef;border:1px solid #41709f"></div>
<div class="abs" style="left:488.5px;top:323px;width:145.5px;height:44px;background:#094a8d"></div>
<div class="abs" style="left:489.5px;top:367px;width:143.5px;height:66.5px;background:#00e400"></div>
<div class="abs" style="left:488.5px;width:145.5px;top:333.4px;text-align:center;font-size:8.75px;line-height:12px;margin-top:-6px;color:#fff;font-weight:bold;letter-spacing:0.00px">Current Conditions</div>
<div class="abs" style="left:488.5px;width:145.5px;top:346.2px;text-align:center;font-size:7.06px;line-height:12px;margin-top:-6px;color:#fff;font-weight:bold;letter-spacing:0.00px">observed at</div>
<div class="abs" style="left:488.5px;width:145.5px;top:357.8px;text-align:center;font-size:8.72px;line-height:12px;margin-top:-6px;color:#fff;font-weight:bold;letter-spacing:0.00px">Apr 8, 2021 8:00 AM (LT)</div>
<div class="abs" style="left:488.5px;width:145.5px;top:384.6px;text-align:center;font-size:11.50px;line-height:12px;margin-top:-6px;color:#0a2a0a;font-weight:bold;letter-spacing:0.00px">40 AQI</div>
<div class="abs" style="left:488.5px;width:145.5px;top:400.4px;text-align:center;font-size:11.50px;line-height:12px;margin-top:-6px;color:#0a2a0a;font-weight:bold;letter-spacing:0.00px">Good</div>
<div class="abs" style="left:488.5px;width:145.5px;top:416.4px;text-align:center;font-size:11.60px;line-height:12px;margin-top:-6px;color:#0a2a0a;font-weight:bold;letter-spacing:0.00px">PM2.5</div>
<div class="abs" style="left:488.5px;width:145.5px;top:443.4px;text-align:center;font-size:6.97px;line-height:12px;margin-top:-6px;color:#222;font-weight:bold;letter-spacing:0.00px">Health Message</div>
<div class="abs" style="left:491.4px;top:452px;font-size:7.12px;line-height:12.2px;color:#222">The AQI value for your community is<br>between 0 and 50. Air quality is satisfactory<br>and poses little or no health risk.</div>
<div class="abs note" style="left:488.3px;top:493.4px">Note: Values above 500 are considered Beyond</div>
</body></html>
